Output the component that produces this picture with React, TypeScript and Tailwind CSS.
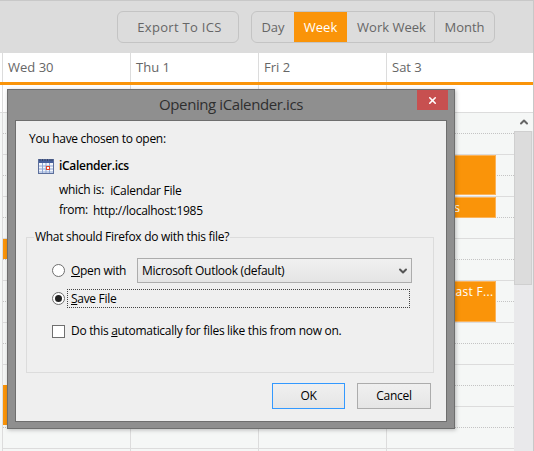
import { ChevronDown, ChevronUp, X } from 'lucide-react'

const days = ['Wed 30', 'Thu 1', 'Fri 2', 'Sat 3']
const slots = Array.from({ length: 16 }, (_, i) => i)

function CalendarIcon() {
  return (
    <svg width="16" height="16" viewBox="0 0 16 16" className="shrink-0">
      <rect x="0.5" y="1.5" width="15" height="14" fill="#f4f7fc" stroke="#5c6f9c" />
      <rect x="1" y="2" width="14" height="3" fill="#47609c" />
      <path d="M2 1v2M4.5 1v2M7 1v2M9.5 1v2M12 1v2M14 1v2" stroke="#39466b" strokeWidth="1" />
      <path d="M1 8h14M1 11h14M1 14h14M4.5 5v10M8 5v10M11.5 5v10" stroke="#8fa6d4" strokeWidth="1" />
      <rect x="8.5" y="8.5" width="3" height="3" fill="#fff" stroke="#e2452b" />
    </svg>
  )
}

function Radio({ checked }: { checked?: boolean }) {
  return (
    <div className="flex h-[13px] w-[13px] shrink-0 items-center justify-center rounded-full border border-[#6f6f6f] bg-white">
      {checked && <div className="h-[7px] w-[7px] rounded-full bg-[#222]" />}
    </div>
  )
}

function Dialog() {
  return (
    <div className="absolute top-[88px] left-[7px] flex h-[340px] w-[448px] flex-col border border-[#6e6e6e] bg-[#8f8f8f] shadow-[1px_1px_4px_rgba(0,0,0,0.25)]">
      <div className="relative flex h-[30px] shrink-0 items-center justify-center pb-[1px] text-[15px] tracking-[-0.4px] text-[#2f2f2f]">
        Opening iCalender.ics
        <div className="absolute top-0 right-[6px] flex h-[20px] w-[31px] items-center justify-center bg-[#c75050] text-white">
          <X size={11} strokeWidth={3.5} />
        </div>
      </div>
      <div className="mx-[7px] flex h-[302px] flex-col border border-[#6e6e6e] bg-[#efefef] text-[12px] leading-[16px] tracking-[-0.3px] text-black">
        <div className="mt-[10px] ml-[13px]">You have chosen to open:</div>
        <div className="mt-[11px] ml-[22px] flex items-center gap-[5px] font-semibold">
          <CalendarIcon />
          iCalender.ics
        </div>
        <div className="mt-[8px] ml-[43px] flex gap-[6px]">
          <span>which is:</span>
          <span className="mt-[1px]">iCalendar File</span>
        </div>
        <div className="mt-[3px] ml-[43px] flex gap-[5px]">
          <span>from:</span>
          <span className="mt-[1px]">http://localhost:1985</span>
        </div>
        <fieldset className="mt-[10px] mr-[12px] ml-[10px] h-[144px] border border-[#dcdcdc]">
          <legend className="ml-[7px] px-[1px]">What should Firefox do with this file?</legend>
          <div className="pl-[25px]">
            <div className="mt-[13px] flex items-center">
              <Radio />
              <span className="ml-[6px] w-[66px]">
                <span className="underline">O</span>pen with
              </span>
              <div className="flex h-[25px] w-[275px] items-center justify-between border border-[#acacac] bg-gradient-to-b from-[#f0f0f0] to-[#e5e5e5] pr-[2px] pl-[4px]">
                Microsoft Outlook (default)
                <ChevronDown size={12} strokeWidth={4} className="text-[#555]" />
              </div>
            </div>
            <div className="mt-[6px] flex items-center">
              <Radio checked />
              <div className="ml-[2px] flex h-[19px] w-[343px] items-center border border-dotted border-[#444] pl-[3px]">
                <span>
                  <span className="underline">S</span>ave File
                </span>
              </div>
            </div>
            <div className="mt-[15px] flex items-center">
              <div className="h-[13px] w-[13px] shrink-0 border border-[#6f6f6f] bg-white" />
              <span className="ml-[6px]">
                Do this <span className="underline">a</span>utomatically for files like this from now on.
              </span>
            </div>
          </div>
        </fieldset>
        <div className="mt-[10px] mr-[15px] flex justify-end gap-[12px]">
          <div className="flex h-[26px] w-[73px] items-center justify-center border border-[#3399ff] bg-gradient-to-b from-[#f0f0f0] to-[#e5e5e5] pb-[1px]">
            OK
          </div>
          <div className="flex h-[26px] w-[74px] items-center justify-center border border-[#acacac] bg-gradient-to-b from-[#f0f0f0] to-[#e5e5e5] pb-[1px]">
            Cancel
          </div>
        </div>
      </div>
    </div>
  )
}

export default function App() {
  return (
    <div className="relative flex h-[451px] w-[534px] flex-col overflow-hidden border-t border-r border-[#c8c8c8] bg-white font-['Open_Sans','Noto_Sans',sans-serif]">
      {/* Toolbar */}
      <div className="flex h-[52px] shrink-0 items-start bg-[#dcdcdc] pt-[10px] pl-[117px] text-[13px] text-[#666]">
        <div className="flex h-[32px] w-[122px] items-center justify-center rounded-[6px] border border-[#c4c4c4] pt-[1px] pl-[3px] tracking-[0.3px]">
          Export To ICS
        </div>
        <div className="ml-[12px] flex h-[32px] w-[244px] overflow-hidden rounded-[6px] border border-[#c4c4c4]">
          <div className="flex w-[42px] items-center justify-center pt-[1px]">Day</div>
          <div className="flex w-[53px] items-center justify-center bg-[#fa9409] pt-[1px] text-white">Week</div>
          <div className="flex w-[88px] items-center justify-center border-r border-[#c4c4c4] pt-[1px] pl-[2px]">Work Week</div>
          <div className="flex flex-1 items-center justify-center pt-[1px]">Month</div>
        </div>
      </div>

      {/* Day header */}
      <div className="flex h-[29px] shrink-0 pl-[2px] text-[13px] text-[#666]">
        {days.map((d) => (
          <div key={d} className="flex w-[128px] items-center border-l border-[#dcdcdc] pt-[1px] pl-[5px]">
            {d}
          </div>
        ))}
      </div>
      <div className="h-[3px] shrink-0 bg-[#fa9409]" />

      {/* All day row */}
      <div className="flex h-[27px] shrink-0 pl-[2px]">
        {days.map((d) => (
          <div key={d} className="w-[128px] border-l border-[#dcdcdc]" />
        ))}
      </div>

      {/* Time grid */}
      <div className="flex min-h-0 flex-1 border-t border-[#dcdcdc] bg-[#f5f7f6]">
        <div className="flex pl-[2px]">
          {days.map((d, col) => (
            <div key={d} className="relative w-[128px] border-l border-[#dcdcdc]">
              {slots.map((i) => (
                <div
                  key={i}
                  className={
                    i % 2 === 0
                      ? 'h-[21px] border-b border-dotted border-[#c4c4c4]'
                      : 'h-[21px] border-b border-[#dcdcdc]'
                  }
                />
              ))}
              {col === 0 && (
                <>
                  <div className="absolute top-[126px] left-0 h-[20px] w-[8px] bg-[#fa9409]" />
                  <div className="absolute top-[272px] left-0 h-[40px] w-[8px] bg-[#fa9409]" />
                </>
              )}
              {col === 3 && (
                <>
                  <div className="absolute top-[42px] right-[18px] h-[40px] w-[100px] border border-[#fbb35a] bg-[#fa9409]" />
                  <div className="absolute top-[84px] right-[18px] flex h-[21px] w-[100px] items-center justify-end border border-[#fbb35a] bg-[#fa9409] pr-[35px] text-[12px] text-white">
                    s
                  </div>
                  <div className="absolute top-[168px] right-[18px] h-[41px] w-[100px] border border-[#fbb35a] bg-[#fa9409] pt-[1px] pl-[52px] text-[12px] tracking-[0.3px] whitespace-nowrap text-white">
                    Last F...
                  </div>
                </>
              )}
            </div>
          ))}
        </div>

        {/* Scrollbar */}
        <div className="flex w-[19px] shrink-0 flex-col bg-[#e9e9eb]">
          <div className="flex h-[18px] items-center justify-center bg-[#f5f7f6] text-[#666]">
            <ChevronUp size={12} strokeWidth={4} />
          </div>
          <div className="mr-[1px] h-[154px] border border-[#cfcfcf] bg-[#dcdcdc]" />
        </div>
      </div>

      <Dialog />
    </div>
  )
}
